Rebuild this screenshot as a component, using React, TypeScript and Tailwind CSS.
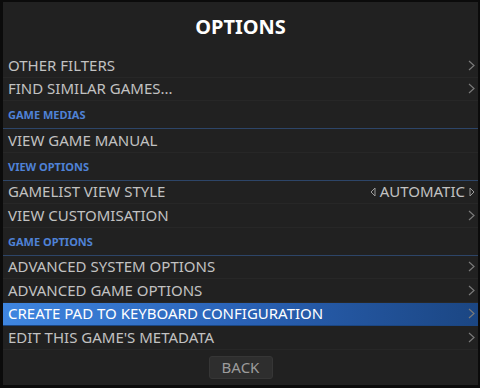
import { ReactNode } from "react";

function Chevron() {
  return (
    <svg width="7" height="11" viewBox="0 0 7 11" className="shrink-0">
      <path d="M1 1 L6 5.5 L1 10" fill="none" stroke="#7a7a7a" strokeWidth="1.2" />
    </svg>
  );
}

function Row({ text, right, selected }: { text: string; right?: ReactNode; selected?: boolean }) {
  return (
    <div
      className={
        "h-[23.5px] flex items-center justify-between pl-[5px] pr-[3px] border-b " +
        (selected
          ? "bg-gradient-to-r from-[#3f86e0] via-[#2a62b6] to-[#1b4683] text-white border-[#1b4683]"
          : "text-[#c2c2c2] border-[#272727]")
      }
    >
      <span className="text-[15px] leading-none">{text}</span>
      {right ?? <Chevron />}
    </div>
  );
}

function Header({ text }: { text: string }) {
  return (
    <div className="h-[28px] flex items-end pb-[8px] pl-[5px] border-b border-[#2d4568]">
      <span className="text-[11px] font-bold leading-none text-[#4f82d6]">{text}</span>
    </div>
  );
}

function Switcher() {
  return (
    <div className="flex items-center gap-[4px] text-[#c2c2c2]">
      <svg width="6" height="10" viewBox="0 0 6 10">
        <path d="M5 1 L1 5 L5 9 Z" fill="none" stroke="#9a9a9a" strokeWidth="1" />
      </svg>
      <span className="text-[15px] leading-none">AUTOMATIC</span>
      <svg width="6" height="10" viewBox="0 0 6 10">
        <path d="M1 1 L5 5 L1 9 Z" fill="none" stroke="#9a9a9a" strokeWidth="1" />
      </svg>
    </div>
  );
}

export default function App() {
  return (
    <div
      className="w-[480px] h-[388px] bg-[#0b0b0b] pt-[2px] pl-[3px] pr-[2px] overflow-hidden"
      style={{ fontFamily: '"Noto Sans", "Open Sans", sans-serif' }}
    >
      <div className="h-[383px] bg-[#212121] flex flex-col">
        <div className="h-[52px] flex items-center justify-center">
          <h1 className="text-[20px] font-bold text-white leading-none mt-[-3px]">OPTIONS</h1>
        </div>
        <Row text="OTHER FILTERS" />
        <Row text="FIND SIMILAR GAMES..." />
        <Header text="GAME MEDIAS" />
        <Row text="VIEW GAME MANUAL" right={<span />} />
        <Header text="VIEW OPTIONS" />
        <Row text="GAMELIST VIEW STYLE" right={<Switcher />} />
        <Row text="VIEW CUSTOMISATION" />
        <Header text="GAME OPTIONS" />
        <Row text="ADVANCED SYSTEM OPTIONS" />
        <Row text="ADVANCED GAME OPTIONS" />
        <Row text="CREATE PAD TO KEYBOARD CONFIGURATION" selected />
        <Row text="EDIT THIS GAME'S METADATA" />
        <div className="flex justify-center pt-[6px]">
          <button className="w-[64px] h-[23px] rounded-[3px] bg-[#2e2e2e] border border-[#363636] text-[15px] text-[#9c9c9c] leading-none">
            BACK
          </button>
        </div>
      </div>
    </div>
  );
}
